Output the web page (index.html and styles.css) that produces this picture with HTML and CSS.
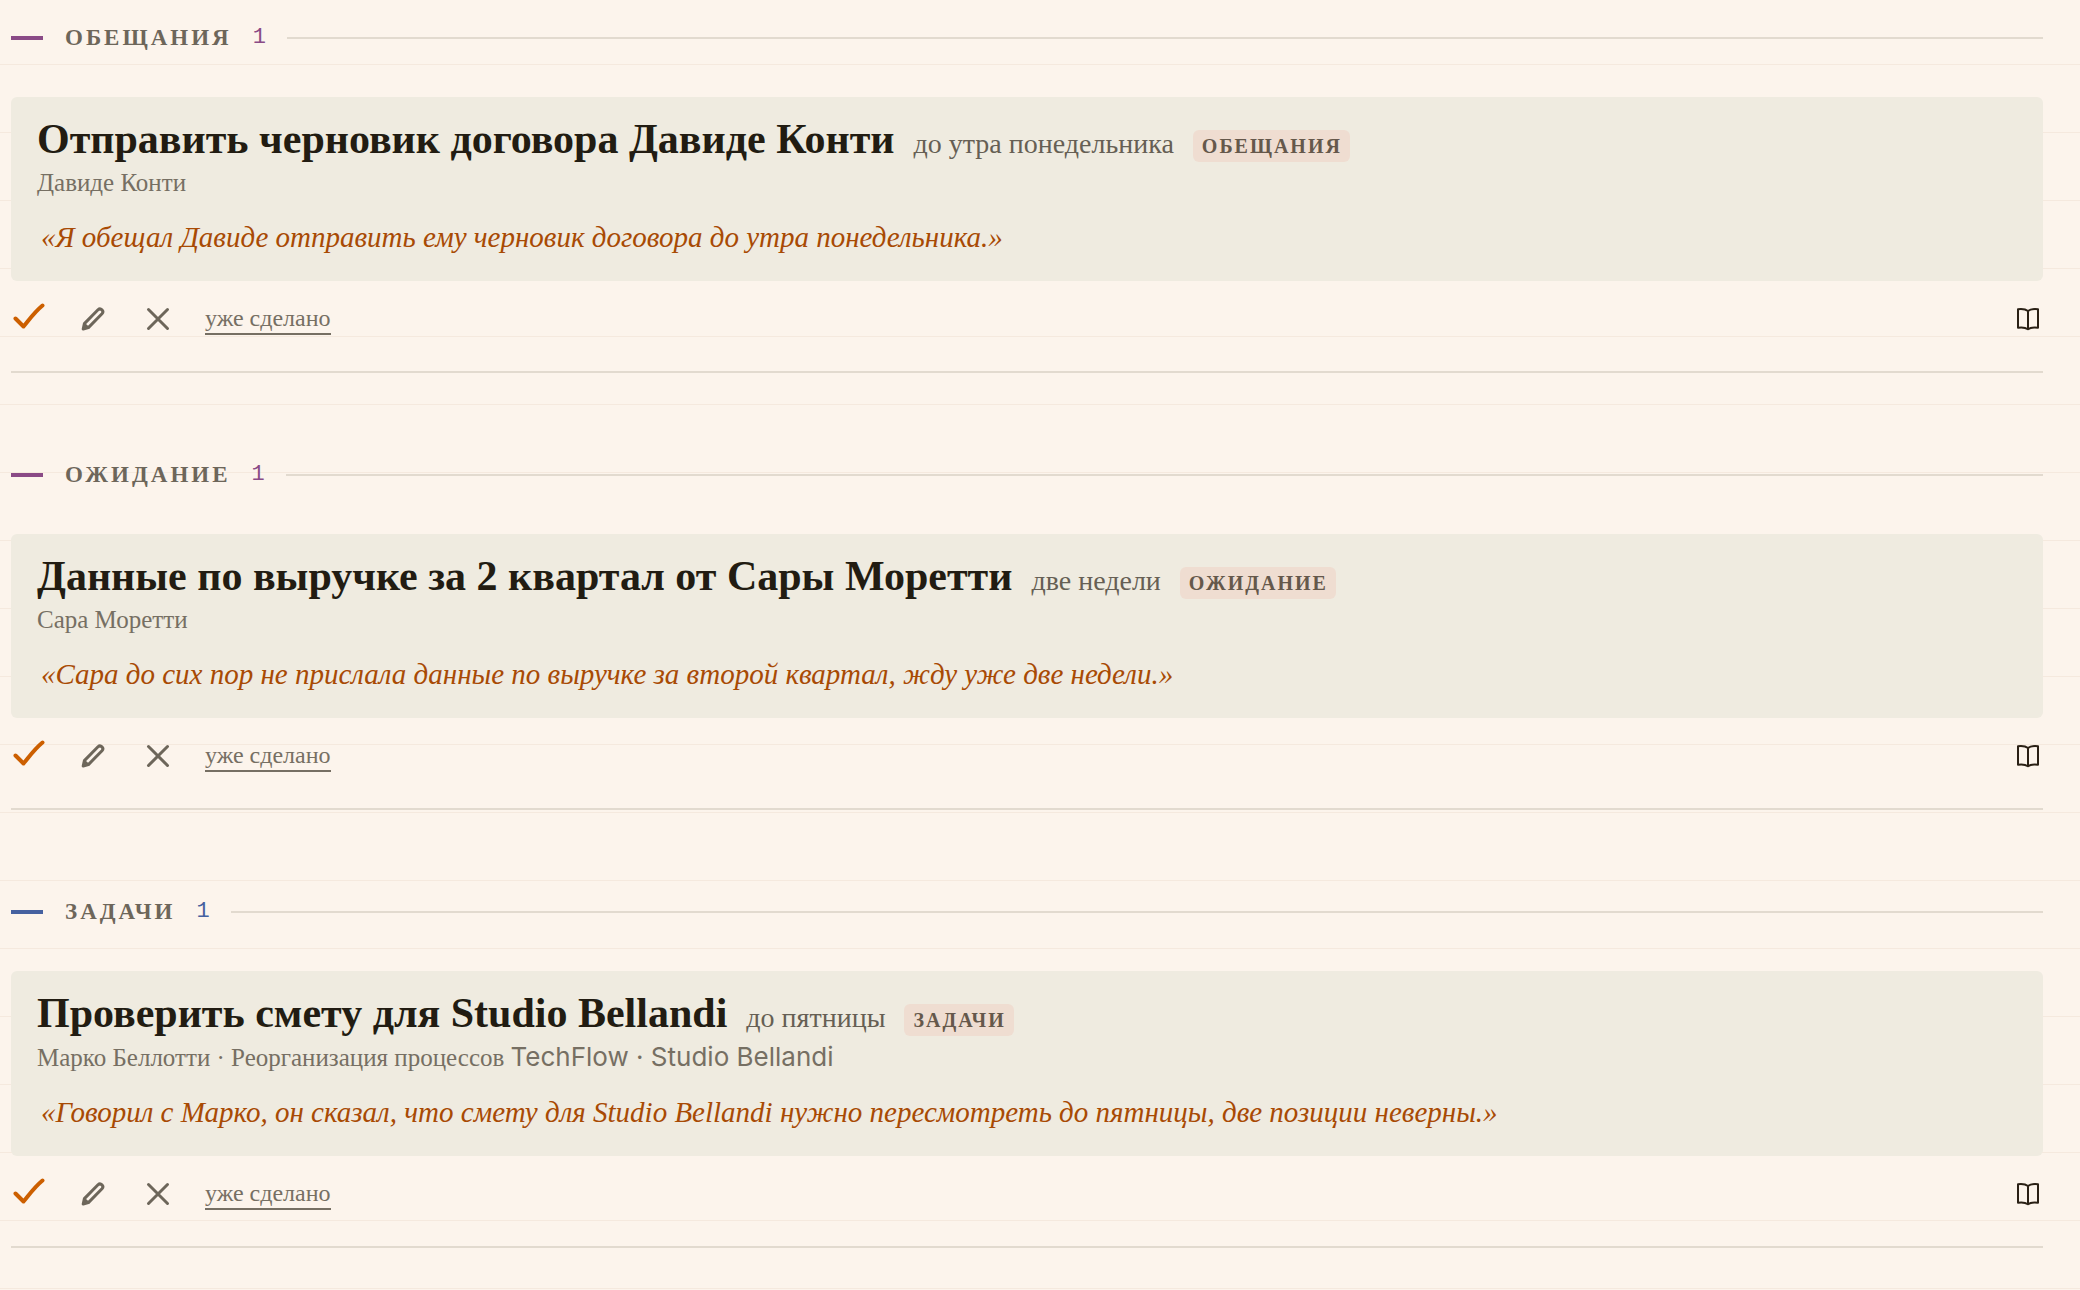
FILE: index.html
```html
<!DOCTYPE html>
<html lang="ru">
<head>
    <meta charset="UTF-8">
    <meta name="viewport" content="width=device-width, initial-scale=1.0">
    <title>Входящие</title>
    <link rel="stylesheet" href="styles.css">
</head>
<body>
    <!-- Общие иконки -->
    <svg class="sprite" aria-hidden="true">
        <symbol id="icon-check" viewBox="0 0 32 32">
            <path d="M2.500 15.500l8 8C16 17 21 9.500 29.500 2.500"/>
        </symbol>
        <symbol id="icon-pencil" viewBox="0 0 24 24">
            <path d="M2.200 22l1.200-5.400L17 2.800a2.830 2.830 0 0 1 4 4L7.400 20.600zM3.600 17.500l3 3"/>
        </symbol>
        <symbol id="icon-close" viewBox="0 0 24 24">
            <path d="M2.500 2.500l19 19M21.500 2.500l-19 19"/>
        </symbol>
        <symbol id="icon-book" viewBox="0 0 24 24">
            <path d="M12 4C9.500 2 5.500 1.800 2 2.200v18.500c3.500-.5 7.500-.2 10 1.600 2.500-1.800 6.500-2.100 10-1.600V2.200C18.500 1.800 14.500 2 12 4zM12 4v18"/>
        </symbol>
    </svg>

    <main class="inbox">
        <section class="group">
            <header class="group-head purple">
                <span class="mark"></span>
                <h2>Обещания</h2>
                <span class="count">1</span>
                <span class="rule"></span>
            </header>
            <article class="card">
                <div class="card-top">
                    <h3>Отправить черновик договора Давиде Конти</h3>
                    <span class="due">до утра понедельника</span>
                    <span class="chip">Обещания</span>
                </div>
                <p class="meta">Давиде Конти</p>
                <blockquote>«Я обещал Давиде отправить ему черновик договора до утра понедельника.»</blockquote>
            </article>
            <div class="actions">
                <button class="icon-button accept" aria-label="Принять"><svg><use href="#icon-check"/></svg></button>
                <button class="icon-button edit" aria-label="Изменить"><svg><use href="#icon-pencil"/></svg></button>
                <button class="icon-button reject" aria-label="Отклонить"><svg><use href="#icon-close"/></svg></button>
                <a class="done" href="#">уже сделано</a>
                <button class="icon-button source" aria-label="Открыть запись"><svg><use href="#icon-book"/></svg></button>
            </div>
        </section>

        <section class="group">
            <header class="group-head purple">
                <span class="mark"></span>
                <h2>Ожидание</h2>
                <span class="count">1</span>
                <span class="rule"></span>
            </header>
            <article class="card">
                <div class="card-top">
                    <h3>Данные по выручке за 2 квартал от Сары Моретти</h3>
                    <span class="due">две недели</span>
                    <span class="chip">Ожидание</span>
                </div>
                <p class="meta">Сара Моретти</p>
                <blockquote>«Сара до сих пор не прислала данные по выручке за второй квартал, жду уже две недели.»</blockquote>
            </article>
            <div class="actions">
                <button class="icon-button accept" aria-label="Принять"><svg><use href="#icon-check"/></svg></button>
                <button class="icon-button edit" aria-label="Изменить"><svg><use href="#icon-pencil"/></svg></button>
                <button class="icon-button reject" aria-label="Отклонить"><svg><use href="#icon-close"/></svg></button>
                <a class="done" href="#">уже сделано</a>
                <button class="icon-button source" aria-label="Открыть запись"><svg><use href="#icon-book"/></svg></button>
            </div>
        </section>

        <section class="group">
            <header class="group-head blue">
                <span class="mark"></span>
                <h2>Задачи</h2>
                <span class="count">1</span>
                <span class="rule"></span>
            </header>
            <article class="card">
                <div class="card-top">
                    <h3>Проверить смету для Studio Bellandi</h3>
                    <span class="due">до пятницы</span>
                    <span class="chip">Задачи</span>
                </div>
                <p class="meta">Марко Беллотти · Реорганизация процессов <span class="latin">TechFlow · Studio Bellandi</span></p>
                <blockquote>«Говорил с Марко, он сказал, что смету для Studio Bellandi нужно пересмотреть до пятницы, две позиции неверны.»</blockquote>
            </article>
            <div class="actions">
                <button class="icon-button accept" aria-label="Принять"><svg><use href="#icon-check"/></svg></button>
                <button class="icon-button edit" aria-label="Изменить"><svg><use href="#icon-pencil"/></svg></button>
                <button class="icon-button reject" aria-label="Отклонить"><svg><use href="#icon-close"/></svg></button>
                <a class="done" href="#">уже сделано</a>
                <button class="icon-button source" aria-label="Открыть запись"><svg><use href="#icon-book"/></svg></button>
            </div>
        </section>
    </main>
</body>
</html>
```
FILE: styles.css
```css
* {
    box-sizing: border-box;
}

body {
    margin: 0;
    min-height: 100vh;
    overflow-x: hidden;
    font-family: "Liberation Serif", serif;
    color: #221c12;
    /* линовка, как в тетради */
    background: #fcf4ec repeating-linear-gradient(to bottom, transparent 0, transparent 64px, #f5e9de 64px, #f5e9de 65px, transparent 65px, transparent 68px);
}

h2, h3, p, blockquote {
    margin: 0;
}

.sprite {
    display: none;
}

.inbox {
    display: flex;
    flex-direction: column;
    gap: 82px;
    padding: 18px 37px 0 11px;
}

.group {
    border-bottom: 2px solid #e2dacf;
}

.group-head {
    display: flex;
    align-items: center;
    height: 40px;
    margin-bottom: 39px;
}

.mark {
    width: 32px;
    height: 4px;
    margin-right: 22px;
    background: currentColor;
}

.purple {
    color: #8a4a86;
}

.blue {
    color: #4561a0;
}

.group-head h2 {
    font-size: 23px;
    line-height: 40px;
    letter-spacing: 3px;
    text-transform: uppercase;
    color: #6d665a;
}

.count {
    margin: 0 21px;
    font-family: "Liberation Mono", monospace;
    font-size: 22px;
    line-height: 40px;
}

.rule {
    flex: 1;
    height: 2px;
    background: #e2dacf;
}

.card {
    padding: 17px 26px 20px;
    border-radius: 6px;
    background: #efebe0;
}

.card-top {
    display: flex;
    align-items: baseline;
    gap: 19px;
    height: 50px;
}

.card h3 {
    font-size: 42px;
    line-height: 50px;
}

.due {
    font-size: 28px;
    color: #665f54;
}

.chip {
    padding: 0 8px 0 9px;
    border-radius: 6px;
    font-size: 20px;
    line-height: 32px;
    font-weight: bold;
    letter-spacing: 2px;
    text-transform: uppercase;
    color: #65584b;
    background: #efddd1;
}

.meta {
    font-size: 25px;
    line-height: 38px;
    color: #766f63;
}

.latin {
    font-family: Inter, sans-serif;
    font-size: 26px;
}

.card blockquote {
    margin-top: 11px;
    padding-left: 4px;
    font-size: 29px;
    line-height: 48px;
    font-style: italic;
    color: #a84a04;
}

.actions {
    display: flex;
    align-items: center;
    height: 90px;
    padding: 0 3px 14px 2px;
}

.icon-button {
    width: 24px;
    height: 24px;
    padding: 0;
    border: 0;
    background: none;
    color: #6d665a;
    cursor: pointer;
}

.icon-button svg {
    display: block;
    width: 100%;
    height: 100%;
    fill: none;
    stroke: currentColor;
    stroke-width: 3;
    stroke-linecap: round;
    stroke-linejoin: round;
}

.accept {
    width: 32px;
    height: 32px;
    margin-right: 36px;
    color: #cc5f00;
}

.accept svg {
    stroke-width: 4;
}

.edit {
    margin-right: 41px;
}

.reject {
    margin-right: 35px;
}

.source {
    margin-left: auto;
    color: #2a2015;
}

.source svg {
    stroke-width: 2;
}

.done {
    border-bottom: 2px solid #766f63;
    font-size: 24px;
    line-height: 30px;
    color: #766f63;
    text-decoration: none;
}
```
